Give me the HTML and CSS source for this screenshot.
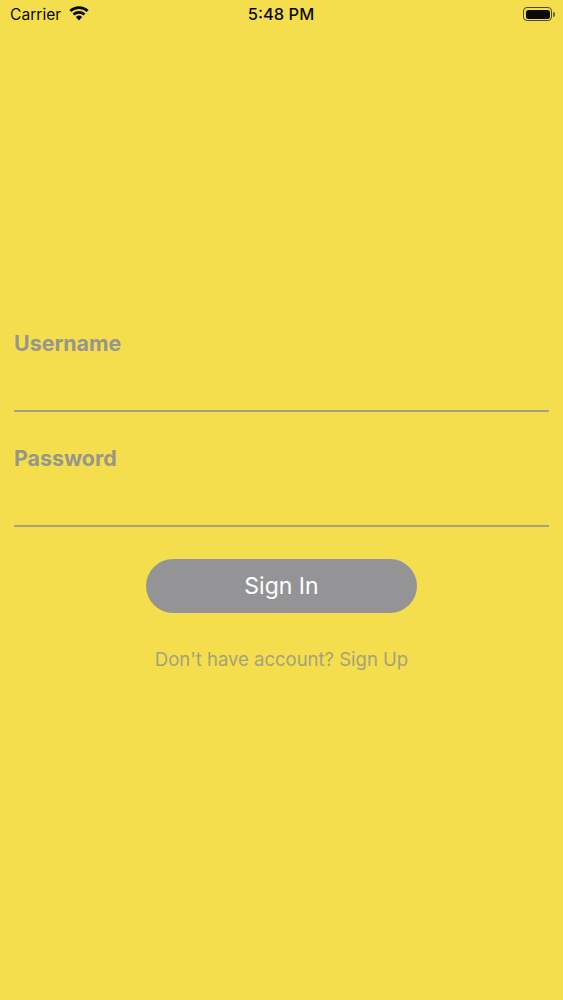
FILE: index.html
```html
<!DOCTYPE html>
<html lang="en">
<head>
<meta charset="utf-8">
<title>Sign In</title>
<link rel="stylesheet" href="styles.css">
</head>
<body>
<div class="screen">
  <header class="status">
    <div class="status-left">
      <span>Carrier</span>
      <svg class="wifi" viewBox="0 0 20 15" width="20" height="15" aria-hidden="true">
        <path d="M10 14.5 L6.9 11 A4.6 4.6 0 0 1 13.1 11 Z" fill="#0b0b05"/>
        <path d="M5.4 9.4 L3.6 7.4 A9.6 9.6 0 0 1 16.4 7.4 L14.6 9.4 A7 7 0 0 0 5.4 9.4 Z" fill="#0b0b05"/>
        <path d="M2.2 5.9 L0.4 3.9 A14.4 14.4 0 0 1 19.6 3.9 L17.8 5.9 A11.8 11.8 0 0 0 2.2 5.9 Z" fill="#0b0b05"/>
      </svg>
    </div>
    <div class="status-time">5:48 PM</div>
    <div class="status-right">
      <div class="battery"><div class="battery-fill"></div></div>
      <div class="battery-cap"></div>
    </div>
  </header>
  <main class="form">
    <div class="field">
      <label class="field-label">Username</label>
      <div class="field-line"></div>
    </div>
    <div class="field">
      <label class="field-label">Password</label>
      <div class="field-line"></div>
    </div>
    <button class="signin">Sign In</button>
    <p class="signup">Don't have account? Sign Up</p>
  </main>
</div>
</body>
</html>
```

FILE: styles.css
```css
* { box-sizing: border-box; }
html, body { margin: 0; padding: 0; }
body { font-family: Inter, "Liberation Sans", sans-serif; }
.screen {
  width: 563px;
  height: 1000px;
  background: #f5de4d;
  overflow: hidden;
}
.status {
  height: 28px;
  padding: 0 8px 0 10px;
  display: grid;
  grid-template-columns: 1fr auto 1fr;
  align-items: center;
  color: #0b0b05;
  font-size: 15.6px;
}
.status-left { display: flex; align-items: center; gap: 8px; }
.wifi { margin-top: -2px; }
.status-time { font-weight: 500; font-size: 16.5px; margin-right: 3px; }
.status-right { display: flex; align-items: center; justify-content: flex-end; }
.battery {
  width: 29px;
  height: 14px;
  border: 1px solid #4e4a1c;
  border-radius: 4px;
  padding: 1.5px;
}
.battery-fill { width: 100%; height: 100%; background: #0b0b05; border-radius: 2.5px; }
.battery-cap { width: 2px; height: 5px; background: #6a6426; border-radius: 0 2px 2px 0; margin-left: 1px; }
.form {
  padding: 301px 14px 0;
  display: flex;
  flex-direction: column;
}
.field { height: 115px; display: flex; flex-direction: column; }
.field-label {
  font-size: 21.4px;
  font-weight: 700;
  line-height: 28px;
  color: #97968a;
}
.field-line { height: 2px; background: #a3a384; margin-top: 53px; }
.signin {
  align-self: center;
  width: 271px;
  height: 54px;
  margin-top: 0;
  border: 0;
  border-radius: 27px;
  background: #949496;
  color: #fff;
  font: 400 23px Inter, "Liberation Sans", sans-serif;
}
.signup {
  margin: 34px 0 0;
  text-align: center;
  font-size: 18.5px;
  line-height: 24px;
  color: #a4a27a;
}
```
